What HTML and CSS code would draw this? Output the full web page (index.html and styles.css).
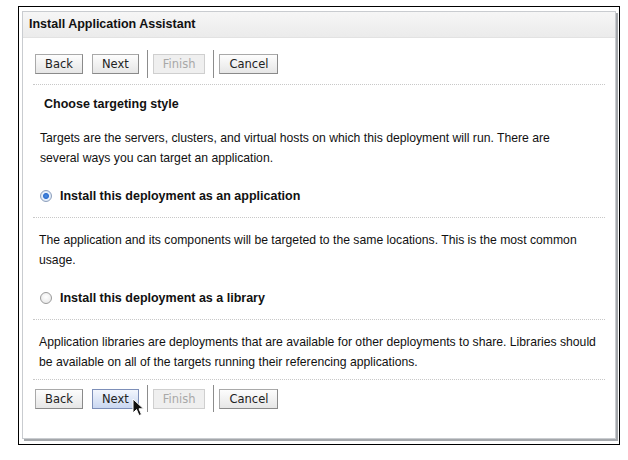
FILE: index.html
```html
<!DOCTYPE html>
<html lang="en">
  <head>
    <meta charset="UTF-8" />
    <title>Install Application Assistant</title>
    <link rel="stylesheet" href="styles.css">
  </head>
  <body>
    <div class="frame">
      <div class="panel">
        <div class="panel-header">Install Application Assistant</div>
        <div class="panel-body">
          <div class="toolbar">
            <button class="btn">Back</button>
            <button class="btn">Next</button>
            <span class="sep"></span>
            <button class="btn" disabled>Finish</button>
            <span class="sep"></span>
            <button class="btn">Cancel</button>
          </div>

          <div class="section">
            <h2 class="section-title">Choose targeting style</h2>
            <p class="intro">
              Targets are the servers, clusters, and virtual hosts on which this deployment will run. There are<br />
              several ways you can target an application.
            </p>
            <label class="option">
              <input type="radio" name="style" checked />
              <span>Install this deployment as an application</span>
            </label>
          </div>

          <div class="section">
            <p class="desc">
              The application and its components will be targeted to the same locations. This is the most common<br />
              usage.
            </p>
            <label class="option">
              <input type="radio" name="style" />
              <span>Install this deployment as a library</span>
            </label>
          </div>

          <div class="section section-last">
            <p class="desc">
              Application libraries are deployments that are available for other deployments to share. Libraries should<br />
              be available on all of the targets running their referencing applications.
            </p>
          </div>

          <div class="toolbar toolbar-bottom">
            <button class="btn">Back</button>
            <span class="hover-wrap">
              <button class="btn btn-hover">Next</button>
              <!-- mouse pointer -->
              <svg class="cursor" width="13" height="20" viewBox="0 0 13 20">
                <path d="M1 1 L1 15 L4.5 11.5 L7 17.5 L9.5 16.5 L7 10.8 L11.5 10.8 Z"
                      fill="#111" stroke="#fff" stroke-width="1" />
              </svg>
            </span>
            <span class="sep"></span>
            <button class="btn" disabled>Finish</button>
            <span class="sep"></span>
            <button class="btn">Cancel</button>
          </div>
        </div>
      </div>
    </div>
  </body>
</html>
```

FILE: styles.css
```css
/* Reset */
* {
  margin: 0;
  padding: 0;
  box-sizing: border-box;
}

body {
  font-family: "Liberation Sans", Arial, sans-serif;
  font-size: 12.5px;
  color: #111;
  background: #fff;
}

/* Outer black frame */
.frame {
  margin: 6px 0 0 18px;
  width: 602px;
  height: 439px;
  border: 1px solid #000;
  padding: 4px 3px 0 3px;
}

.panel {
  height: 428px;
  border: 1px solid #c9ccd0;
  box-shadow: 2px 2px 0 #a4a7ab;
  background: #fff;
}

.panel-header {
  height: 26px;
  line-height: 25px;
  padding-left: 6px;
  font-weight: bold;
  background: linear-gradient(#f6f6f6, #ebebeb);
  border-bottom: 1px solid #e2e2e2;
}

.panel-body {
  padding: 0 10px;
}

/* Button bars */
.toolbar {
  display: flex;
  align-items: center;
  height: 47px;
  padding: 12px 0 7px 2px;
  border-bottom: 1px dotted #c8c8c8;
}

.toolbar-bottom {
  border-bottom: none;
  height: 33px;
  padding: 4px 0 0 2px;
}

.btn {
  font-family: "DejaVu Sans", sans-serif;
  font-size: 11.5px;
  color: #222;
  height: 20px;
  padding: 0 9px;
  margin-right: 9px;
  background: linear-gradient(#fdfdfd, #e6e6e6);
  border: 1px solid #a9a9a9;
  border-right-color: #8a8a8a;
  border-bottom-color: #8a8a8a;
}

.btn:disabled {
  color: #a8a8a8;
  background: #efefef;
  border-color: #cfcfcf;
}

.btn-hover {
  background: linear-gradient(#f2f6fd, #c9d7f1);
  border-color: #7d8fb8;
}

.sep {
  width: 1px;
  height: 28px;
  background: #8c8c8c;
  margin: 0 5px 0 -1px;
}

.toolbar-bottom .sep {
  height: 27px;
}

.hover-wrap {
  position: relative;
  display: flex;
}

.cursor {
  position: absolute;
  left: 40px;
  top: 9px;
}

/* Content sections */
.section {
  border-bottom: 1px dotted #c8c8c8;
  padding-bottom: 11px;
}

.section-last {
  padding-bottom: 7px;
}

.section-title {
  font-size: 12.5px;
  font-weight: bold;
  line-height: 20px;
  padding-left: 11px;
  margin-top: 9px;
}

.intro,
.desc {
  font-size: 12.2px;
  line-height: 20px;
  white-space: nowrap;
}

.intro {
  padding-left: 7px;
  margin-top: 14px;
}

.desc {
  padding-left: 6px;
  margin-top: 12px;
}

.option {
  display: flex;
  align-items: center;
  height: 20px;
  margin-top: 18px;
  padding-left: 7px;
  font-weight: bold;
}

.option input {
  appearance: none;
  width: 12px;
  height: 12px;
  margin-right: 8px;
  border-radius: 50%;
  border: 1px solid #9a9a9a;
  background: radial-gradient(circle at 50% 40%, #ffffff, #e4e4e4);
}

.option input:checked {
  border-color: #8ea0bc;
  background: radial-gradient(circle, #4d8ee0 0, #2f6fcf 2.5px, #e8f0fb 3.5px, #d6e2f2 6px);
}
```
